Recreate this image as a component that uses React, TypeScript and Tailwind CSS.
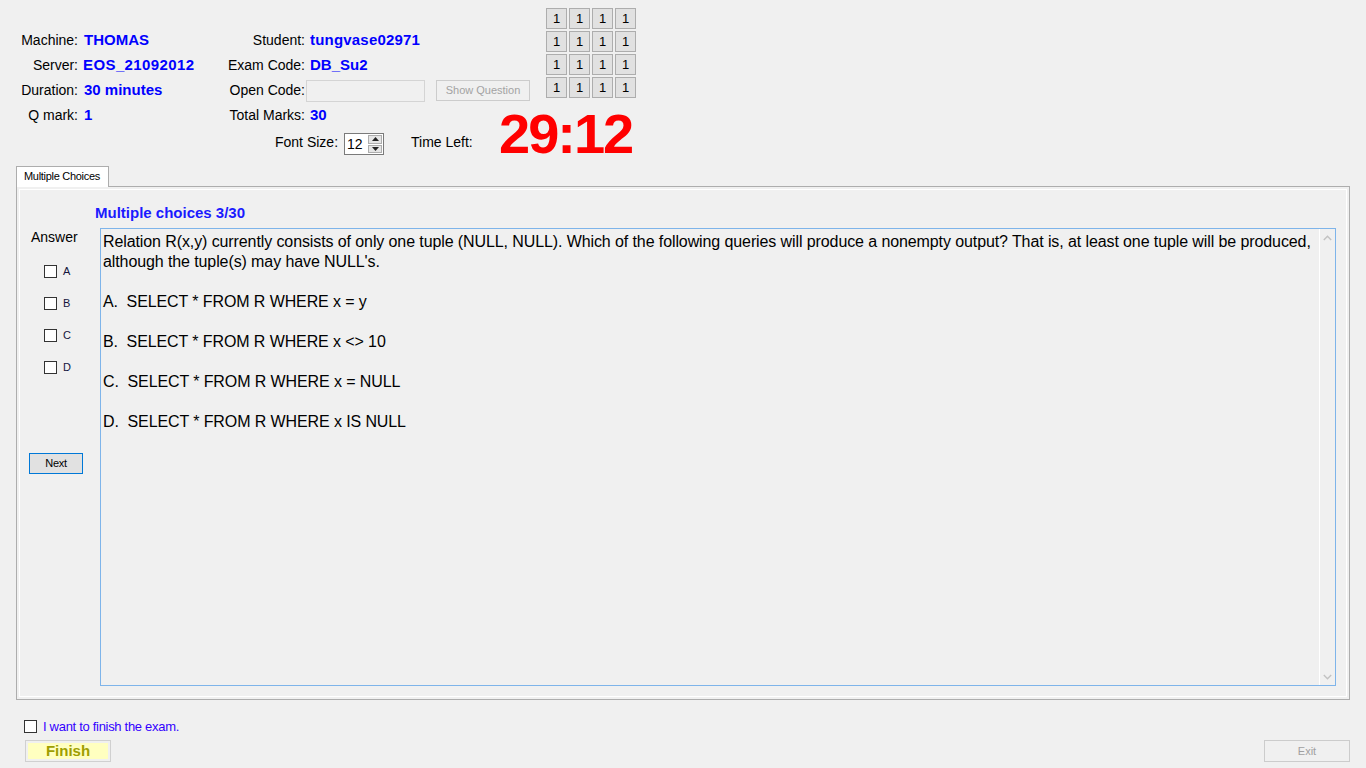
import React from "react";

function Box() {
  return <span className="inline-block w-[13px] h-[13px] border border-[#333333] bg-white shrink-0" />;
}

function Chevron({ down }: { down?: boolean }) {
  return (
    <svg width="9" height="6" viewBox="0 0 9 6" className={down ? "rotate-180" : ""}>
      <path d="M0.8 5 L4.5 1.3 L8.2 5" fill="none" stroke="#c2c2c2" strokeWidth="1.4" />
    </svg>
  );
}

function Tri({ down }: { down?: boolean }) {
  return (
    <svg width="7" height="4" viewBox="0 0 7 4">
      {down ? <path d="M0 0 H7 L3.5 4 Z" fill="#222" /> : <path d="M0 4 H7 L3.5 0 Z" fill="#222" />}
    </svg>
  );
}

export default function App() {
  const lbl = "text-right whitespace-nowrap";
  const val = "font-bold text-[15px] text-[#0000ff] whitespace-nowrap";
  return (
    <div className="w-[1366px] h-[768px] bg-[#f0f0f0] font-['Liberation_Sans',Arial,sans-serif] text-black flex flex-col overflow-hidden">
      {/* Top area */}
      <div className="h-[166px] flex shrink-0">
        <div className="w-[499px] shrink-0 pt-[28px] flex flex-col">
          <div className="grid grid-cols-[78px_122px_105px_auto] auto-rows-[25px] items-center text-[14px]">
            <span className={lbl}>Machine:</span>
            <span className={`pl-[6px] ${val}`}>THOMAS</span>
            <span className={lbl}>Student:</span>
            <span className={`pl-[5px] ${val} tracking-[0.2px]`}>tungvase02971</span>

            <span className={lbl}>Server:</span>
            <span className={`pl-[5px] ${val} tracking-[0.4px]`}>EOS_21092012</span>
            <span className={lbl}>Exam Code:</span>
            <span className={`pl-[5px] ${val}`}>DB_Su2</span>

            <span className={lbl}>Duration:</span>
            <span className={`pl-[6px] ${val}`}>30 minutes</span>
            <span className={lbl}>Open Code:</span>
            <div className="flex items-center pl-[1px]">
              <div className="w-[119px] h-[22px] border border-[#d4d4d4] bg-[#f0f0f0] shrink-0" />
              <div className="ml-[11px] w-[94px] h-[21px] border border-[#cccccc] bg-[#f0f0f0] flex items-center justify-center text-[11px] text-[#a3a3a3] whitespace-nowrap shrink-0">
                Show Question
              </div>
            </div>

            <span className={lbl}>Q mark:</span>
            <span className={`pl-[6px] ${val}`}>1</span>
            <span className={lbl}>Total Marks:</span>
            <span className={`pl-[5px] ${val}`}>30</span>
          </div>
          <div className="mt-[5px] h-[22px] flex items-start pl-[275px] text-[14px]">
            <span className="leading-[18px] whitespace-nowrap">Font Size:</span>
            <div className="ml-[6px] w-[40px] h-[22px] border border-[#7a7a7a] bg-white flex shrink-0">
              <span className="pl-[2px] text-[14px] leading-[20px] flex-1">12</span>
              <div className="w-[15px] flex flex-col gap-[1px] py-[1px] pr-[1px]">
                <div className="h-[9px] bg-[#e5e5e5] border border-[#adadad] flex items-center justify-center">
                  <Tri />
                </div>
                <div className="h-[9px] bg-[#e5e5e5] border border-[#adadad] flex items-center justify-center">
                  <Tri down />
                </div>
              </div>
            </div>
            <span className="ml-[27px] leading-[18px] whitespace-nowrap">Time Left:</span>
          </div>
        </div>
        <div className="flex flex-col">
          <div className="ml-[47px] mt-[8px] grid grid-cols-[repeat(4,21px)] auto-rows-[21px] gap-[2px]">
            {Array.from({ length: 16 }).map((_, i) => (
              <div key={i} className="border border-[#adadad] bg-[#e1e1e1] flex items-center justify-center text-[13px]">
                1
              </div>
            ))}
          </div>
          <div className="mt-[8px] text-[56px] leading-[56px] font-bold text-[#ff0000] tracking-[-2px] whitespace-nowrap">
            29:12
          </div>
        </div>
      </div>

      {/* Tab control */}
      <div className="pl-[16px] flex flex-col shrink-0">
        <div className="relative z-10 -mb-[1px] w-[93px] h-[21px] border border-b-0 border-[#adadad] bg-white text-[11px] tracking-[-0.3px] pl-[7px] leading-[19px] whitespace-nowrap">
          Multiple Choices
        </div>
        <div className="w-[1334px] h-[514px] border border-[#adadad] p-[2px]">
          <div className="w-full h-full border border-white flex flex-col">
            <div className="mt-[14px] pl-[75px] text-[15px] leading-[18px] font-bold text-[#1a1aff]">
              Multiple choices 3/30
            </div>
            <div className="mt-[6px] flex">
              <div className="w-[80px] flex flex-col">
                <span className="pl-[11px] text-[14px] leading-[18px]">Answer</span>
                <div className="mt-[19px] pl-[24px] flex flex-col gap-[19px]">
                  {["A", "B", "C", "D"].map((l) => (
                    <div key={l} className="h-[13px] flex items-center gap-[6px]">
                      <Box />
                      <span className="text-[11px] text-[#14143c]">{l}</span>
                    </div>
                  ))}
                </div>
                <div className="mt-[79px] ml-[9px] w-[54px] h-[21px] border border-[#0078d7] bg-[#e1e1e1] flex items-center justify-center text-[11px] tracking-[-0.3px]">
                  Next
                </div>
              </div>
              <div className="w-[1236px] h-[458px] border border-[#7eb4ea] flex">
                <div className="flex-1 pl-[2px] pt-[3px] text-[16px] leading-[20px] tracking-[-0.1px] whitespace-pre-wrap">
                  <p>
                    Relation R(x,y) currently consists of only one tuple (NULL, NULL). Which of the following queries will produce a nonempty output? That is, at least one tuple will be produced, although the tuple(s) may have NULL's.
                  </p>
                  <p className="mt-[20px]">A.  SELECT * FROM R WHERE x = y</p>
                  <p className="mt-[20px]">B.  SELECT * FROM R WHERE x &lt;&gt; 10</p>
                  <p className="mt-[20px]">C.  SELECT * FROM R WHERE x = NULL</p>
                  <p className="mt-[20px]">D.  SELECT * FROM R WHERE x IS NULL</p>
                </div>
                <div className="w-[16px] border-l border-white flex flex-col justify-between">
                  <div className="h-[17px] flex items-center justify-center">
                    <Chevron />
                  </div>
                  <div className="h-[17px] flex items-center justify-center">
                    <Chevron down />
                  </div>
                </div>
              </div>
            </div>
          </div>
        </div>
      </div>

      {/* Bottom */}
      <div className="mt-[20px] pl-[24px] flex flex-col">
        <div className="h-[13px] flex items-center gap-[6px]">
          <Box />
          <span className="text-[13px] text-[#3300ff] tracking-[-0.3px] whitespace-nowrap">I want to finish the exam.</span>
        </div>
        <div className="mt-[7px] flex justify-between pr-[16px]">
          <div className="ml-[1px] w-[86px] h-[22px] border border-[#d0d0d0] p-[2px]">
            <div className="w-full h-full bg-[#ffffc0] flex items-center justify-center text-[15px] font-bold text-[#9e9e00]">
              Finish
            </div>
          </div>
          <div className="w-[86px] h-[22px] border border-[#cccccc] flex items-center justify-center text-[11px] text-[#a0a0a0]">
            Exit
          </div>
        </div>
      </div>
    </div>
  );
}
